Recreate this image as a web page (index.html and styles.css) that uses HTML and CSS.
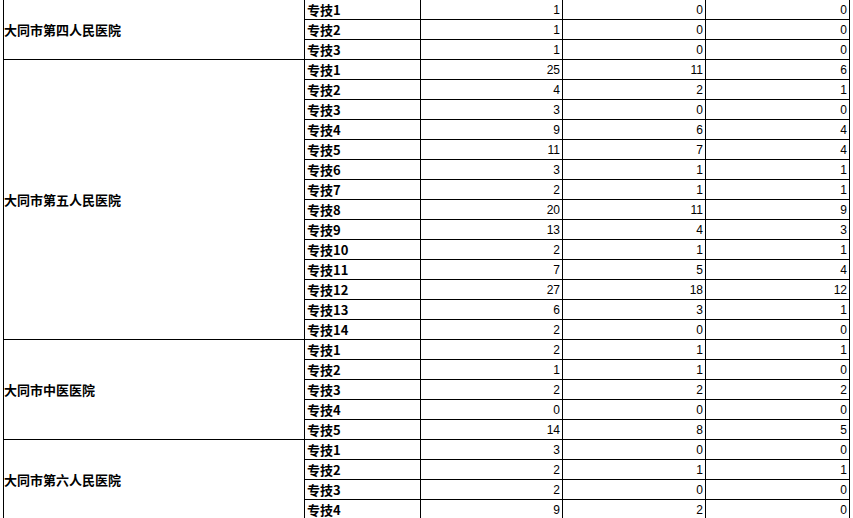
FILE: index.html
```html
<!DOCTYPE html>
<html lang="zh">
<head>
<meta charset="utf-8">
<title>统计表</title>
<link rel="stylesheet" href="styles.css">
</head>
<body>
<table class="sheet">
  <colgroup>
    <col class="c-name"><col class="c-item"><col class="c-n1"><col class="c-n2"><col class="c-n3">
  </colgroup>
  <tbody>
    <tr><td class="name" rowspan="3">大同市第四人民医院</td><td class="item">专技1</td><td class="num">1</td><td class="num">0</td><td class="num">0</td></tr>
    <tr><td class="item">专技2</td><td class="num">1</td><td class="num">0</td><td class="num">0</td></tr>
    <tr><td class="item">专技3</td><td class="num">1</td><td class="num">0</td><td class="num">0</td></tr>

    <tr><td class="name" rowspan="14">大同市第五人民医院</td><td class="item">专技1</td><td class="num">25</td><td class="num">11</td><td class="num">6</td></tr>
    <tr><td class="item">专技2</td><td class="num">4</td><td class="num">2</td><td class="num">1</td></tr>
    <tr><td class="item">专技3</td><td class="num">3</td><td class="num">0</td><td class="num">0</td></tr>
    <tr><td class="item">专技4</td><td class="num">9</td><td class="num">6</td><td class="num">4</td></tr>
    <tr><td class="item">专技5</td><td class="num">11</td><td class="num">7</td><td class="num">4</td></tr>
    <tr><td class="item">专技6</td><td class="num">3</td><td class="num">1</td><td class="num">1</td></tr>
    <tr><td class="item">专技7</td><td class="num">2</td><td class="num">1</td><td class="num">1</td></tr>
    <tr><td class="item">专技8</td><td class="num">20</td><td class="num">11</td><td class="num">9</td></tr>
    <tr><td class="item">专技9</td><td class="num">13</td><td class="num">4</td><td class="num">3</td></tr>
    <tr><td class="item">专技10</td><td class="num">2</td><td class="num">1</td><td class="num">1</td></tr>
    <tr><td class="item">专技11</td><td class="num">7</td><td class="num">5</td><td class="num">4</td></tr>
    <tr><td class="item">专技12</td><td class="num">27</td><td class="num">18</td><td class="num">12</td></tr>
    <tr><td class="item">专技13</td><td class="num">6</td><td class="num">3</td><td class="num">1</td></tr>
    <tr><td class="item">专技14</td><td class="num">2</td><td class="num">0</td><td class="num">0</td></tr>

    <tr><td class="name" rowspan="5">大同市中医医院</td><td class="item">专技1</td><td class="num">2</td><td class="num">1</td><td class="num">1</td></tr>
    <tr><td class="item">专技2</td><td class="num">1</td><td class="num">1</td><td class="num">0</td></tr>
    <tr><td class="item">专技3</td><td class="num">2</td><td class="num">2</td><td class="num">2</td></tr>
    <tr><td class="item">专技4</td><td class="num">0</td><td class="num">0</td><td class="num">0</td></tr>
    <tr><td class="item">专技5</td><td class="num">14</td><td class="num">8</td><td class="num">5</td></tr>

    <tr><td class="name" rowspan="4">大同市第六人民医院</td><td class="item">专技1</td><td class="num">3</td><td class="num">0</td><td class="num">0</td></tr>
    <tr><td class="item">专技2</td><td class="num">2</td><td class="num">1</td><td class="num">1</td></tr>
    <tr><td class="item">专技3</td><td class="num">2</td><td class="num">0</td><td class="num">0</td></tr>
    <tr><td class="item">专技4</td><td class="num">9</td><td class="num">2</td><td class="num">0</td></tr>
  </tbody>
</table>
</body>
</html>
```
FILE: styles.css
```css
html, body {
  margin: 0;
  padding: 0;
  background: #fff;
  overflow: hidden;
}

.sheet {
  border-collapse: collapse;
  table-layout: fixed;
  width: 847px;
  margin: -1px 0 0 3px;
  font-family: "Noto Sans CJK SC", "Liberation Sans", sans-serif;
  font-size: 13px;
  color: #000;
}

.c-name { width: 301px; }
.c-item { width: 116px; }
.c-n1 { width: 142px; }
.c-n2 { width: 143px; }
.c-n3 { width: 144px; }

.sheet tr { height: 20px; }

.sheet td {
  border: 1px solid #000;
  padding: 0;
  height: 19px;
  line-height: 16px;
  white-space: nowrap;
  overflow: hidden;
}

.name {
  font-weight: bold;
  padding-left: 0 !important;
  vertical-align: middle;
}

.item {
  font-weight: bold;
  padding-left: 2px !important;
}

.num {
  text-align: right;
  padding-right: 2px !important;
  font-family: "Liberation Sans", sans-serif;
  font-size: 12px;
}
```
